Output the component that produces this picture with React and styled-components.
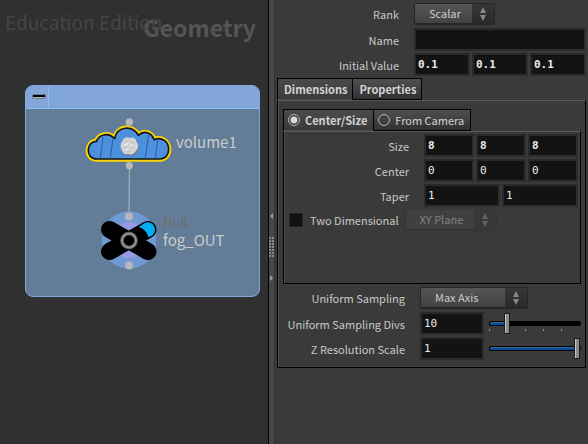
import React, { useState } from "react";
import styled, { createGlobalStyle, css } from "styled-components";

const sans = `"Noto Sans CJK SC", "Noto Sans", sans-serif`;
const mono = `"DejaVu Sans Mono", monospace`;

const GlobalStyle = createGlobalStyle`
  *, *::before, *::after { box-sizing: border-box; }
  html, body { margin: 0; background: #3a3a3a; }
  body { font: 11px/16px ${sans}; color: #c8c8c8; }
  input, select, button { font: inherit; color: inherit; margin: 0; }
`;

const Workspace = styled.main`
  display: grid;
  grid-template-columns: minmax(268px, 268fr) 6px minmax(314px, 314fr);
  min-height: 100vh;
`;

/* ---------- Network editor ---------- */

const NetworkPane = styled.section`
  position: relative;
  overflow: hidden;
  background: #303030;
`;

const Watermark = styled.div`
  position: absolute;
  left: 5px;
  top: 8px;
  font-size: 19px;
  line-height: 28px;
  color: #454545;
  white-space: nowrap;
`;

const ContextName = styled.h1`
  position: absolute;
  right: 12px;
  top: 11px;
  margin: 0;
  font-size: 23px;
  line-height: 32px;
  font-weight: 700;
  color: #555555;
`;

const NetworkBox = styled.div`
  position: absolute;
  left: 25px;
  top: 85px;
  width: 235px;
  height: 212px;
  display: flex;
  flex-direction: column;
  overflow: hidden;
  border: 1px solid #7fa9dc;
  border-radius: 8px;
  background: #637d98;
`;

const BoxHeader = styled.header`
  display: flex;
  height: 23px;
  flex: none;
  border-bottom: 1px solid #8bbcf8;
  background: #82a6d8;
`;

const CollapseButton = styled.button`
  width: 23px;
  padding: 0 0 2px 4px;
  display: grid;
  place-items: center;
  border: 0;
  border-right: 1px solid #8bbcf8;
  background: none;
`;

const Drawing = styled.svg`
  position: absolute;
  left: ${(p) => p.$x}px;
  top: ${(p) => p.$y}px;
`;

const NodeLabel = styled.div`
  position: absolute;
  left: ${(p) => p.$x}px;
  top: ${(p) => p.$y}px;
  font-size: ${(p) => (p.$kind ? 13 : 15)}px;
  line-height: ${(p) => (p.$kind ? 16 : 20)}px;
  color: ${(p) => (p.$kind ? "#6b6b6b" : "#cbcbcb")};
  white-space: nowrap;
`;

/* ---------- Splitter ---------- */

const Splitter = styled.div`
  display: flex;
  flex-direction: column;
  align-items: center;
  padding-top: 212px;
  border-left: 1px solid #000;
  background: #484848;
`;

/* ---------- Parameters ---------- */

const ParameterPane = styled.form`
  padding: 3px 2px 4px 2px;
  background: #3a3a3a;
  border-left: 1px solid #333333;
`;

const Rows = styled.div`
  display: flex;
  flex-direction: column;
  gap: 3px;
`;

const Row = styled.div`
  display: grid;
  grid-template-columns: 122px minmax(0, 1fr);
  column-gap: 15px;
  align-items: center;
  height: 22px;
`;

const Label = styled.label`
  justify-self: end;
  white-space: nowrap;
`;

const Fields = styled.div`
  display: flex;
  align-items: center;
  gap: 2px;
  min-width: 0;
`;

const TextField = styled.input`
  flex: 1 1 0;
  min-width: 0;
  width: 0;
  height: 23px;
  padding: 0 2px;
  border: 2px solid #292929;
  border-right-color: #2d2d2d;
  border-bottom-color: #2d2d2d;
  border-radius: 0;
  outline: 0;
  background: #131313;
  color: #ececec;
  font: ${(p) => (p.$bold ? 700 : 400)} 11px/16px ${mono};
  ${(p) => p.$width && css`flex: 0 0 ${p.$width}px;`}
`;

const SelectWrap = styled.div`
  display: inline-grid;
  width: ${(p) => p.$width}px;
  height: 22px;
  border: 1px solid ${(p) => (p.$off ? "#353535" : "#262626")};
  border-bottom-width: 2px;
  border-radius: 2px;
  background: ${(p) => (p.$off ? "#404040" : "linear-gradient(#555555, #424242)")};
  > * { grid-area: 1 / 1; }
`;

const NativeSelect = styled.select`
  appearance: none;
  min-width: 0;
  padding: 0 24px 2px 14px;
  border: 0;
  outline: 0;
  background: none;
  color: #cccccc;
  opacity: 1;
  &:disabled { color: #808080; opacity: 1; }
`;

const SelectArrows = styled.span`
  justify-self: end;
  width: 22px;
  display: grid;
  place-items: center;
  pointer-events: none;
  color: ${(p) => (p.$off ? "#626262" : "#878787")};
  background: ${(p) => (p.$off ? "#383838" : "linear-gradient(#363636, #2b2b2b)")};
`;

const TabSet = styled.section`
  margin-top: ${(p) => (p.$inner ? 0 : 3)}px;
`;

const TabBar = styled.div`
  display: flex;
`;

const tabLook = css`
  display: flex;
  align-items: center;
  height: 22px;
  border: 1px solid #000;
  white-space: nowrap;
  background: ${(p) =>
    p.$active ? "linear-gradient(#4b4b4b, #3a3a3a)" : "linear-gradient(#505050, #303030)"};
  border-bottom-color: ${(p) => (p.$active ? "transparent" : "#000")};
  & + & { border-left: 0; }
`;

const Tab = styled.button`
  ${tabLook}
  padding: 0 5px 0 6px;
  font-weight: 700;
  color: #d2d2d2;
`;

const RadioTab = styled.label`
  ${tabLook}
  gap: 5px;
  padding: 0 6px 0 4px;
  font-weight: ${(p) => (p.$active ? 700 : 400)};
  color: #d2d2d2;
`;

const Radio = styled.input`
  appearance: none;
  width: 12px;
  height: 12px;
  flex: none;
  border: 1px solid #b5b5b5;
  border-radius: 50%;
  &:checked { background: radial-gradient(circle, #d8d8d8 3px, #3a3a3a 4px); }
`;

const TabPanel = styled.div`
  border: 1px solid #000;
  border-top-color: #5a5a5a;
  box-shadow: inset 1px 0 #505050;
  padding: ${(p) => (p.$inner ? "2px 2px 52px 3px" : "8px 4px 8px 5px")};
`;

const LowerRows = styled(Rows)`
  padding-top: 3px;
`;

const ToggleRow = styled.div`
  display: flex;
  align-items: center;
  height: 22px;
  padding-left: 2px;
`;

const Checkbox = styled.input`
  appearance: none;
  width: 14px;
  height: 14px;
  border: 1px solid #272727;
  background: #111111;
`;

const ToggleLabel = styled.label`
  margin: 0 6px 0 7px;
`;

const Slider = styled.input`
  appearance: none;
  flex: 1 1 0;
  min-width: 0;
  height: 22px;
  padding: 0;
  margin: 0 0 0 3px;
  background: ${(p) =>
    p.$ticks
      ? "repeating-linear-gradient(90deg, #999 0 1px, transparent 1px 18px) 0 16px / 80px 2px no-repeat"
      : "none"};
  &::-webkit-slider-runnable-track {
    height: 5px;
    border: 1px solid #000;
    border-radius: 2px;
    background:
      linear-gradient(#3d6590 0 1px, #064f9f 1px) 0 0 / var(--fill) 100% no-repeat,
      #000;
  }
  &::-webkit-slider-thumb {
    appearance: none;
    width: 6px;
    height: 21px;
    margin-top: -9px;
    border: 1px solid #1c1c1c;
    background: linear-gradient(90deg, #c4c4c4 1px, #8b8b8b 1px);
  }
`;

function Cloud() {
  const d =
    "M36 147 C17 147 9 134 10 119 C11 105 20 94 34 94 C41 76 67 64 89 86 C95 49 142 43 160 76 C176 61 200 66 207 89 C230 79 251 95 251 118 C251 135 241 147 225 147 Z";
  const puff =
    "M112 94 C116 83 126 79 134 84 C145 79 154 87 155 96 C163 106 159 118 154 121 C149 133 137 137 130 132 C120 136 112 129 111 121 C104 112 107 100 112 94 Z";
  return (
    <Drawing $x={85} $y={110} width="90" height="60" viewBox="0 0 270 180" aria-hidden="true">
      <circle cx="133" cy="36" r="11" fill="#b8b8b8" />
      <path d={d} fill="none" stroke="#fbd500" strokeWidth="16" strokeLinejoin="round" />
      <path d={d} fill="#4d90dd" stroke="#10151c" strokeWidth="5" strokeLinejoin="round" />
      <path
        d="M54 82 L46 145 M84 84 L76 145 M191 72 L181 145 M218 88 L211 145"
        stroke="#2a5e9b"
        strokeWidth="3"
        fill="none"
      />
      <path d={puff} fill="#6b7788" transform="translate(2 4)" />
      <path d={puff} fill="#d3d3d3" />
      <path
        d="M118 100 l10 -8 M138 95 l10 7 M114 114 l12 -4 M137 116 l10 -6 M124 126 l14 -3"
        fill="none"
        stroke="#c2c2c2"
        strokeWidth="4"
      />
      <path d="M118 107 l12 -7 M136 108 l10 -3 M122 120 l8 -3" fill="none" stroke="#e6e6e6" strokeWidth="5" />
      <circle cx="133" cy="167" r="11" fill="#b8b8b8" />
    </Drawing>
  );
}

function NullNode() {
  return (
    <Drawing $x={98} $y={208} width="62" height="64" viewBox="98 208 62 64" aria-hidden="true">
      <path
        d="M102 232 A28 28 0 0 1 156 232 V248 A28 28 0 0 1 102 248 Z"
        fill="#7099d4"
      />
      <circle cx="129" cy="240" r="18" fill="#999ae6" />
      <path
        d="M109.500 229.500 L148 251.500 M109.500 251.500 L148 229.500"
        stroke="#000"
        strokeWidth="17"
        strokeLinecap="round"
      />
      <path
        d="M138.500 227 L144 223.500 C150 220 155 225 155 229.500 C155 234 152 236 148.500 237.300 C147 232 143 228 138.500 227 Z"
        fill="#00adf5"
      />
      <circle cx="129" cy="240.500" r="7" fill="none" stroke="#4b4b4b" strokeWidth="4" />
      <circle cx="129" cy="240.500" r="7" fill="none" stroke="#929292" strokeWidth="2" />
      <circle cx="129" cy="216.500" r="4" fill="#b8b8b8" />
      <circle cx="129" cy="265.500" r="4" fill="#b8b8b8" />
    </Drawing>
  );
}

function Network() {
  return (
    <NetworkPane aria-label="Network editor">
      <ContextName>Geometry</ContextName>
      <Watermark>Education Edition</Watermark>
      <NetworkBox>
        <BoxHeader>
          <CollapseButton type="button" aria-label="Collapse box">
            <svg width="14" height="5" viewBox="0 0 14 5">
              <rect width="14" height="5" fill="#66809f" />
              <rect x="1" y="1" width="12" height="2" fill="#000" />
              <rect x="1" y="3" width="12" height="1" fill="#b5b5b5" />
            </svg>
          </CollapseButton>
        </BoxHeader>
      </NetworkBox>
      <Drawing $x={126} $y={166} width="6" height="50" aria-hidden="true">
        <path d="M3.500 0 L3 50" stroke="#8baeb5" strokeWidth="1.500" />
      </Drawing>
      <Cloud />
      <NullNode />
      <NodeLabel $x={176} $y={132}>volume1</NodeLabel>
      <NodeLabel $x={163} $y={214} $kind>Null</NodeLabel>
      <NodeLabel $x={163} $y={230}>fog_OUT</NodeLabel>
    </NetworkPane>
  );
}

function SplitterGrip() {
  const dots = [];
  for (let y = 0; y < 7; y++) for (let x = 0; x < 2; x++) dots.push([x, y]);
  return (
    <svg width="5" height="72" viewBox="0 0 5 72" aria-hidden="true">
      <path d="M4 1 V7 L1 4 Z M1 63 V69 L4 66 Z" fill="#a0a0a0" />
      {dots.map(([x, y]) => (
        <rect key={`${x}-${y}`} x={x * 3} y={25 + y * 3} width="2" height="2" fill="#898989" />
      ))}
    </svg>
  );
}

function Menu({ id, width, value, label, disabled }) {
  return (
    <SelectWrap $width={width} $off={disabled}>
      <NativeSelect id={id} defaultValue={value} aria-label={label} disabled={disabled}>
        <option>{value}</option>
      </NativeSelect>
      <SelectArrows $off={disabled}>
        <svg width="8" height="14" viewBox="0 0 8 14" aria-hidden="true">
          <path d="M4 0 L7 6 H1 Z M1 8 H7 L4 14 Z" fill="currentColor" />
        </svg>
      </SelectArrows>
    </SelectWrap>
  );
}

function VectorRow({ id, label, values, bold }) {
  return (
    <Row>
      <Label htmlFor={`${id}-0`}>{label}</Label>
      <Fields>
        {values.map((value, i) => (
          <TextField
            key={i}
            id={`${id}-${i}`}
            aria-label={i ? `${label} ${i + 1}` : undefined}
            defaultValue={value}
            $bold={bold}
          />
        ))}
      </Fields>
    </Row>
  );
}

function SliderRow({ id, label, initial, max, ticks }) {
  const [value, setValue] = useState(initial);
  const change = (e) => setValue(e.target.value);
  return (
    <Row>
      <Label htmlFor={id}>{label}</Label>
      <Fields>
        <TextField id={id} value={value} onChange={change} $width={64} />
        <Slider
          type="range"
          aria-label={label}
          min="0"
          max={max}
          step="any"
          value={value}
          onChange={change}
          $ticks={ticks}
          style={{ "--fill": `${(value / max) * 100}%` }}
        />
      </Fields>
    </Row>
  );
}

function Parameters() {
  const [tab, setTab] = useState("Dimensions");
  const [mode, setMode] = useState("Center/Size");
  return (
    <ParameterPane>
      <Rows>
        <Row>
          <Label htmlFor="rank">Rank</Label>
          <Fields><Menu id="rank" width={81} value="Scalar" /></Fields>
        </Row>
        <VectorRow id="name" label="Name" values={[""]} />
        <VectorRow id="initial" label="Initial Value" values={["0.1", "0.1", "0.1"]} bold />
      </Rows>
      <TabSet>
        <TabBar role="tablist">
          {["Dimensions", "Properties"].map((name) => (
            <Tab
              key={name}
              type="button"
              role="tab"
              aria-selected={tab === name}
              $active={tab === name}
              onClick={() => setTab(name)}
            >
              {name}
            </Tab>
          ))}
        </TabBar>
        <TabPanel role="tabpanel">
          <TabSet $inner>
            <TabBar>
              {["Center/Size", "From Camera"].map((name) => (
                <RadioTab key={name} $active={mode === name}>
                  <Radio type="radio" name="mode" checked={mode === name} onChange={() => setMode(name)} />
                  {name}
                </RadioTab>
              ))}
            </TabBar>
            <TabPanel $inner>
              <Rows>
                <VectorRow id="size" label="Size" values={["8", "8", "8"]} bold />
                <VectorRow id="center" label="Center" values={["0", "0", "0"]} />
                <VectorRow id="taper" label="Taper" values={["1", "1"]} />
                <ToggleRow>
                  <Checkbox id="twod" type="checkbox" />
                  <ToggleLabel htmlFor="twod">Two Dimensional</ToggleLabel>
                  <Menu id="plane" width={92} value="XY Plane" label="Plane" disabled />
                </ToggleRow>
              </Rows>
            </TabPanel>
          </TabSet>
          <LowerRows>
            <Row>
              <Label htmlFor="sampling">Uniform Sampling</Label>
              <Fields><Menu id="sampling" width={108} value="Max Axis" /></Fields>
            </Row>
            <SliderRow id="divs" label="Uniform Sampling Divs" initial={10} max={60} ticks />
            <SliderRow id="zscale" label="Z Resolution Scale" initial={1} max={1} />
          </LowerRows>
        </TabPanel>
      </TabSet>
    </ParameterPane>
  );
}

export default function App() {
  return (
    <>
      <GlobalStyle />
      <Workspace>
        <Network />
        <Splitter role="separator" aria-orientation="vertical">
          <SplitterGrip />
        </Splitter>
        <Parameters />
      </Workspace>
    </>
  );
}
